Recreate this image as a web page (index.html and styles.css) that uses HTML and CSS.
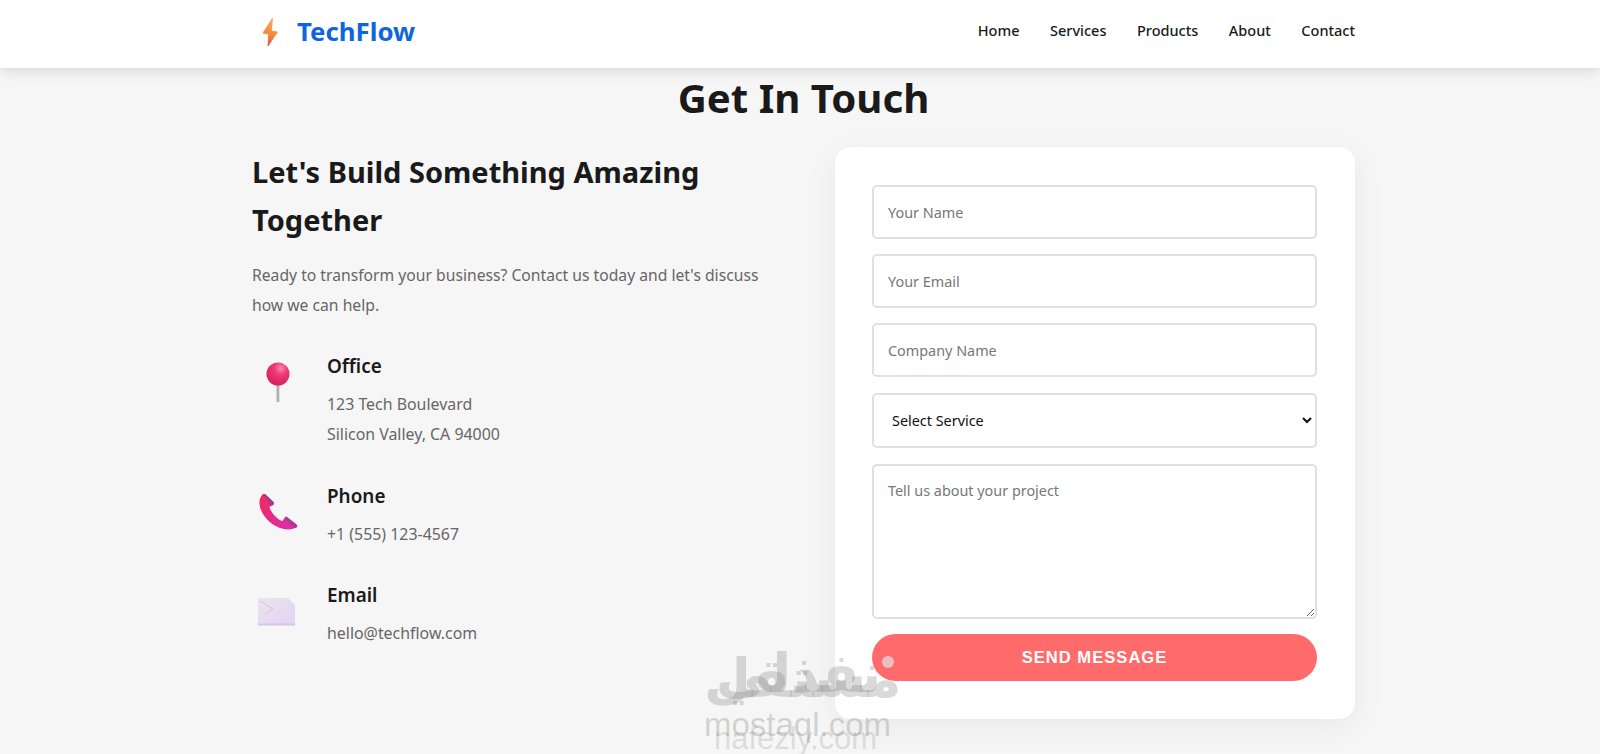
FILE: index.html
```html
<!DOCTYPE html>
<html lang="en">
<head>
<meta charset="utf-8">
<title>TechFlow</title>
<link rel="stylesheet" href="styles.css">
</head>
<body>
<header class="topbar">
  <div class="wrap topbar-row">
    <a class="logo">
      <svg class="logo-icon" viewBox="0 0 24 36" width="24" height="36">
        <defs><linearGradient id="bolt" x1="0.6" y1="0" x2="0.4" y2="1"><stop offset="0" stop-color="#f7ae55"/><stop offset="0.6" stop-color="#f0883e"/><stop offset="1" stop-color="#d9504e"/></linearGradient></defs>
        <path d="M12.500 5 L3 20 L8.500 21 L8 33 L17.500 19 L11.500 18 Z" fill="url(#bolt)" stroke="url(#bolt)" stroke-width="0.8" stroke-linejoin="round"/>
      </svg>
      <span>TechFlow</span>
    </a>
    <nav class="nav">
      <a>Home</a><a>Services</a><a>Products</a><a>About</a><a>Contact</a>
    </nav>
  </div>
</header>
<main class="wrap">
  <h1 class="title">Get In Touch</h1>
  <div class="columns">
    <section class="info">
      <h2>Let's Build Something Amazing Together</h2>
      <p class="lead">Ready to transform your business? Contact us today and let's discuss how we can help.</p>
      <div class="item item-office">
        <svg class="icon" viewBox="0 0 44 44" width="44" height="44">
          <defs>
            <radialGradient id="pin" cx="0.62" cy="0.25" r="0.8"><stop offset="0" stop-color="#f98aa8"/><stop offset="0.35" stop-color="#ee3a78"/><stop offset="1" stop-color="#d81b60"/></radialGradient>
          </defs>
          <rect x="20.500" y="20" width="2.800" height="21" fill="#b0b0b0"/>
          <circle cx="22" cy="13" r="11.500" fill="url(#pin)"/>
        </svg>
        <div><h3>Office</h3><p>123 Tech Boulevard<br>Silicon Valley, CA 94000</p></div>
      </div>
      <div class="item item-phone">
        <svg class="icon" viewBox="0 0 44 44" width="44" height="44">
          <defs><linearGradient id="ph" x1="0" y1="0" x2="1" y2="1"><stop offset="0" stop-color="#f02a5c"/><stop offset="1" stop-color="#d92fb0"/></linearGradient></defs>
          <path d="M6.500 3.500 C3 7 2.500 13 5 19 C8 27 17 36 28 38 C33 39 38 38 41 36 C41.500 35 41 34 40.500 33.500 L31 26 C30 25.500 29 26 28.500 27 L26.500 30 C22 29 15 22 13.500 16 L17 14 C18 13 18 12 17.500 11 L9.500 3.500 C8.500 2.500 7.500 2.500 6.500 3.500 Z" fill="url(#ph)"/>
          <path d="M7 3 L9.500 3.500 L17.500 11 C18 12 18 13 17 14 L15 15 Z M30 25.500 L40.500 33.500 C41 34 41.500 35 41 36 L39 37 L28.500 27 Z" fill="#a83a92"/>
        </svg>
        <div><h3>Phone</h3><p>+1 (555) 123-4567</p></div>
      </div>
      <div class="item item-email">
        <svg class="icon icon-soft" viewBox="0 0 44 44" width="44" height="44">
          <defs><linearGradient id="env" x1="0" y1="0" x2="1" y2="1"><stop offset="0" stop-color="#ebe3ee"/><stop offset="1" stop-color="#e4d3f2"/></linearGradient></defs>
          <path d="M2 8 H32 L39 15 V35 H2 Z" fill="url(#env)"/>
          <path d="M2 33.500 H39 V35.500 H2 Z" fill="#d8c2ee"/>
          <path d="M4 11 L17 19 L9 24" fill="none" stroke="#d6c4da" stroke-width="1"/>
        </svg>
        <div><h3>Email</h3><p>hello@techflow.com</p></div>
      </div>
    </section>
    <form class="card">
      <input class="field" type="text" placeholder="Your Name">
      <input class="field" type="email" placeholder="Your Email">
      <input class="field" type="text" placeholder="Company Name">
      <select class="field field-select"><option>Select Service</option></select>
      <textarea class="field field-area" placeholder="Tell us about your project"></textarea>
      <button class="send" type="button">SEND MESSAGE</button>
    </form>
  </div>
</main>
<div class="watermark" aria-hidden="true">
  <span class="wm-ar">مستقل</span>
  <span class="wm-ar wm-ar2">نفذلي</span>
  <span class="wm-dot"></span>
  <span class="wm-a">mostaql.com</span>
  <span class="wm-b">nafezly.com</span>
</div>
</body>
</html>
```
FILE: styles.css
```css
* { box-sizing: border-box; }
html, body { margin: 0; height: 754px; overflow: hidden; }
body {
  background: #f6f6f6;
  color: #1a1a1a;
  font-family: "Noto Sans", "Open Sans", sans-serif;
  position: relative;
}
.wrap { width: 1103px; margin-left: 252px; }
.topbar {
  height: 68px;
  background: #fff;
  box-shadow: 0 2px 14px rgba(0,0,0,.14);
}
.topbar-row {
  height: 100%;
  padding-bottom: 6px;
  display: flex;
  align-items: center;
  justify-content: space-between;
}
.logo {
  display: flex;
  align-items: center;
  gap: 13px;
  padding-left: 8px;
  color: #0f66dc;
  font-size: 25.800px;
  font-weight: 700;
}
.nav { display: flex; gap: 30.500px; margin-top: -2px; }
.nav a { font-size: 14.500px; font-weight: 500; color: #1a1a1a; }
.title {
  margin: 5px 0 0;
  text-align: center;
  font-size: 40.200px;
  line-height: 50px;
  font-weight: 700;
}
.columns {
  display: grid;
  grid-template-columns: 1fr 520px;
  gap: 64px;
  margin-top: 24px;
}
.info h2 {
  margin: .500px 0 0;
  font-size: 29px;
  line-height: 48px;
  font-weight: 700;
}
.lead {
  margin: 16.500px 0 0;
  font-size: 15.700px;
  line-height: 30px;
  color: #666;
}
.item {
  display: flex;
  gap: 27px;
  margin-top: 32px;
}
.item .icon { flex: none; margin: 9px 0 0 4px; }
.item .icon-soft { filter: blur(.6px); }
.item h3 { margin: -1px 0 0; font-size: 18.900px; line-height: 30px; font-weight: 600; }
.item p { margin: 8px 0 0; font-size: 15.900px; line-height: 30px; color: #666; }
.item-phone { margin-top: 33px; }
.item-email { margin-top: 32px; }
.card {
  background: #fff;
  border-radius: 16px;
  box-shadow: 0 8px 32px rgba(0,0,0,.06);
  padding: 38px 38px 38px 37px;
  height: 572px;
  display: flex;
  flex-direction: column;
}
.field {
  width: 100%;
  height: 54px;
  flex: none;
  border: 2px solid #e0e0e0;
  border-radius: 5px;
  padding: 0 14px;
  margin-bottom: 15px;
  font-family: inherit;
  font-size: 14.400px;
  color: #111;
  background: #fff;
  outline: none;
}
.field::placeholder { color: #777; }
.field-select { height: 55px; color: #111; margin-top: 1px; margin-bottom: 16px; }
.field-area { height: 155px; padding-top: 15px; resize: vertical; }
.send {
  height: 48px;
  border: 0;
  border-radius: 24px;
  background: #ff6b6b;
  color: #fff;
  font-family: "Liberation Sans", Arial, sans-serif;
  font-size: 16.600px;
  font-weight: 700;
  letter-spacing: 1px;
}
.watermark {
  position: absolute;
  left: 704px;
  top: 640px;
  width: 192px;
  height: 114px;
  pointer-events: none;
}
.watermark span { position: absolute; white-space: nowrap; }
.wm-ar { left: 0; top: 8px; color: rgba(120,120,120,.27); font: 700 54px/62px "DejaVu Sans", sans-serif; }
.wm-ar2 { left: 12px; top: 3px; }
.wm-dot { left: 178px; top: 16px; width: 12px; height: 12px; border-radius: 50%; background: rgba(225,215,215,.8); }
.wm-a { left: 0; top: 68px; font: 400 33px/34px "Liberation Sans", sans-serif; color: rgba(130,130,130,.32); }
.wm-b { left: 10px; top: 84px; font: 400 31px/30px "Liberation Sans", sans-serif; color: rgba(130,130,130,.24); }
```
